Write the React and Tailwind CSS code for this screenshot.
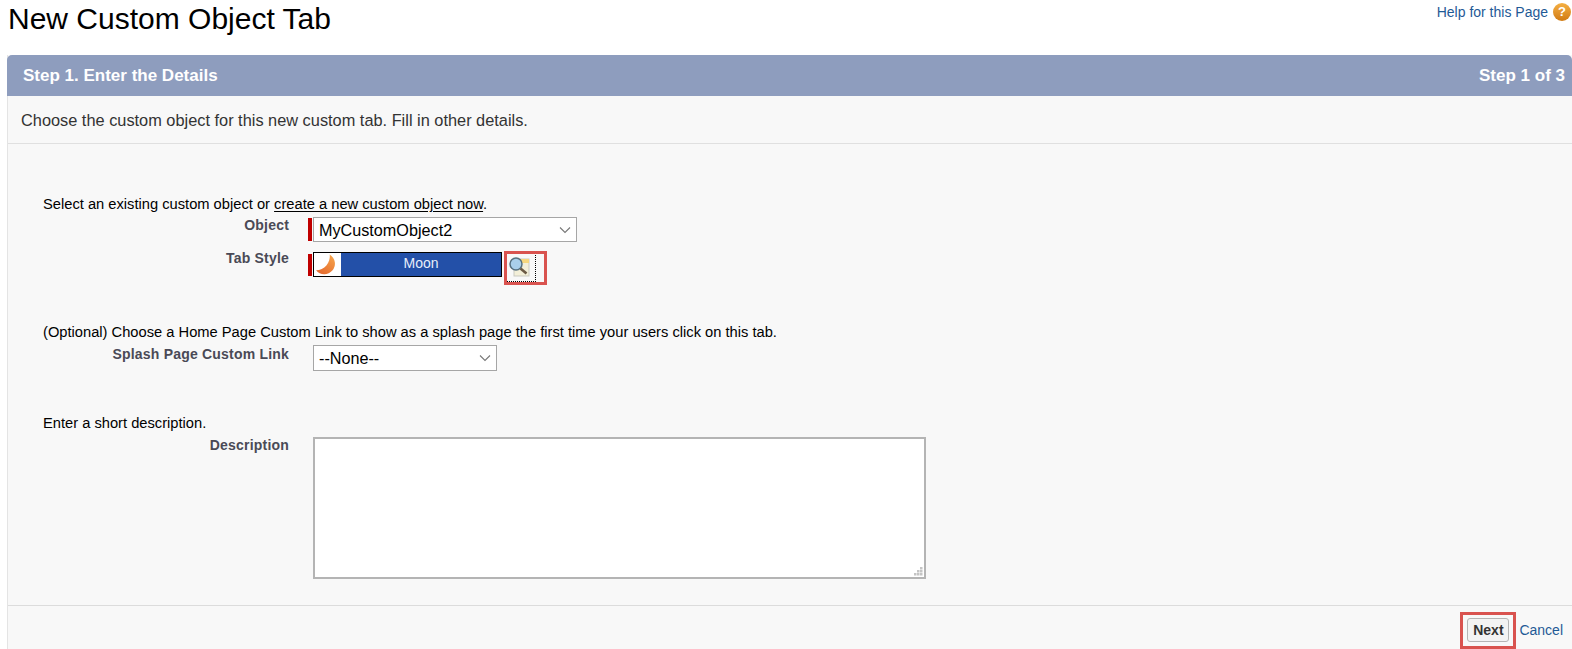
import React from "react";

const font = { fontFamily: '"Liberation Sans", Arial, sans-serif' };

function Label({ children }) {
  return (
    <div className="w-[246px] shrink-0 text-right text-[14px] leading-[16px] font-bold tracking-[0.2px] text-[#4a4a56]">
      {children}
    </div>
  );
}

function Chevron() {
  return (
    <svg
      width="12"
      height="8"
      viewBox="0 0 12 8"
      className="absolute right-[6px] top-[9px] pointer-events-none"
      fill="none"
      stroke="#777"
      strokeWidth="1.1"
    >
      <path d="M1 1.5l5 5 5-5" />
    </svg>
  );
}

function MoonIcon() {
  return (
    <svg width="23" height="23" viewBox="0 0 22 22" className="blur-[0.5px]">
      <defs>
        <linearGradient id="moonFill" x1="0.8" y1="0" x2="0.1" y2="1">
          <stop offset="0" stopColor="#f5a24a" />
          <stop offset="1" stopColor="#e4662c" />
        </linearGradient>
      </defs>
      <path d="M15 1.500A10.100 10.100 0 1 1 2 16.500A13.300 13.300 0 0 0 15 1.500z" fill="url(#moonFill)" />
    </svg>
  );
}

function LookupIcon() {
  return (
    <svg width="22" height="22" viewBox="0 0 22 22">
      <rect x="6" y="3" width="15" height="17" fill="#f3efd8" stroke="#c9c9c0" />
      <rect x="11" y="3" width="10" height="4" fill="#f6d77e" />
      <circle cx="8" cy="8" r="6" fill="#a9cfea" stroke="#56707f" strokeWidth="1.5" />
      <path d="M12.500 12.500l6 5" stroke="#6b5a45" strokeWidth="2.600" />
    </svg>
  );
}

function HelpIcon() {
  return (
    <div className="w-[18px] h-[18px] rounded-full bg-gradient-to-b from-[#f5b042] to-[#d07a10] text-white text-[13px] leading-[18px] font-bold text-center">
      ?
    </div>
  );
}

export default function App() {
  return (
    <div style={font} className="h-[649px] overflow-hidden bg-white text-black">
      {/* page title */}
      <div className="h-[55px] flex justify-between pl-[8px] pr-[1px]">
        <h1 className="text-[30px] leading-[38px] font-normal">New Custom Object Tab</h1>
        <div className="flex gap-[5px] pt-[3px] h-fit">
          <a className="text-[14px] leading-[18px] text-[#1f5a96]">Help for this Page</a>
          <HelpIcon />
        </div>
      </div>

      <div className="ml-[7px] h-[594px] flex flex-col bg-[#f8f8f8] border-l border-[#e4e4e4]">
        <div className="h-[41px] shrink-0 -ml-px rounded-t-[5px] bg-[#8e9dbe] flex items-center justify-between pt-px pl-[16px] pr-[7px] text-white text-[17px] font-bold">
          <span>Step 1. Enter the Details</span>
          <span>Step 1 of 3</span>
        </div>

        <div className="h-[48px] shrink-0 border-b border-[#e0e0e0] flex items-center pl-[13px] pt-[2px] text-[16.35px] text-[#333]">
          Choose the custom object for this new custom tab. Fill in other details.
        </div>

        {/* form */}
        <div className="h-[462px] shrink-0 border-b border-[#dcdcdc] pl-[35px] pt-[52px] text-[14.7px] leading-[16px]">
          <div>
            Select an existing custom object or{" "}
            <a className="underline underline-offset-2">create a new custom object now</a>.
          </div>

          <div className="flex mt-[4px]">
            <div className="pt-[1px]">
              <Label>Object</Label>
            </div>
            <div className="flex ml-[19px] pt-[1px]">
              <div className="w-[4px] h-[23px] bg-[#c00000] mt-px mr-px"></div>
              <div className="relative">
                <select className="block w-[264px] h-[25px] appearance-none bg-white border border-[#a6a6a6] pl-[5px] text-[16.2px] leading-[20px] rounded-none">
                  <option>MyCustomObject2</option>
                </select>
                <Chevron />
              </div>
            </div>
          </div>

          <div className="flex mt-[10px]">
            <div className="-mt-[2px]">
              <Label>Tab Style</Label>
            </div>
            <div className="flex ml-[19px]">
              <div className="w-[4px] h-[22px] bg-[#c00000] mt-[2px] mr-px"></div>
              <div className="w-[189px] h-[25px] border border-black flex bg-white">
                <div className="w-[27px] flex items-center">
                  <MoonIcon />
                </div>
                <div className="flex-1 bg-[#2350a8] text-[#e8eefa] text-center text-[14px] leading-[20px]">
                  Moon
                </div>
              </div>
              <button className="-mt-[1px] ml-[2px] w-[43px] h-[34px] border-[3px] border-[#d9534f] block">
                <div className="w-[29px] h-[27px] border-r border-b border-dotted border-black pl-[1px] pt-[1px]">
                  <LookupIcon />
                </div>
              </button>
            </div>
          </div>

          <div className="mt-[39px]">
            (Optional) Choose a Home Page Custom Link to show as a splash page the first time your users click on this tab.
          </div>

          <div className="flex mt-[5px]">
            <div className="pt-[1px]">
              <Label>Splash Page Custom Link</Label>
            </div>
            <div className="relative ml-[24px]">
              <select className="block w-[184px] h-[26px] appearance-none bg-white border border-[#a6a6a6] pl-[5px] text-[16.2px] leading-[20px] rounded-none">
                <option>--None--</option>
              </select>
              <Chevron />
            </div>
          </div>

          <div className="mt-[44px]">Enter a short description.</div>

          <div className="flex mt-[6px]">
            <div>
              <Label>Description</Label>
            </div>
            <div className="relative ml-[24px]">
              <textarea className="block w-[613px] h-[142px] resize-none bg-white border-2 border-[#b4b4b4] outline-none"></textarea>
              {/* resize grip */}
              <svg width="10" height="10" viewBox="0 0 10 10" className="absolute right-[3px] bottom-[3px]" fill="#c4c4c4">
                <rect x="7" y="1" width="2.500" height="2.500" />
                <rect x="4" y="4" width="2.500" height="2.500" />
                <rect x="7" y="4" width="2.500" height="2.500" />
                <rect x="1" y="7" width="2.500" height="2.500" />
                <rect x="4" y="7" width="2.500" height="2.500" />
                <rect x="7" y="7" width="2.500" height="2.500" />
              </svg>
            </div>
          </div>
        </div>

        {/* footer */}
        <div className="flex-1 flex justify-end pr-[9px] pt-[6px] text-[14px]">
          <div className="flex items-start gap-[3px]">
            <div className="w-[56px] h-[37px] border-[3px] border-[#d9534f] pl-[4px] pt-[3px]">
              <button className="block w-[42px] h-[24px] rounded-[3px] border border-[#b5b5b5] bg-[#f3f3f3] font-bold text-[14px] leading-[20px] text-[#333]">
                Next
              </button>
            </div>
            <a className="pt-[8px] text-[#1f5a96]">Cancel</a>
          </div>
        </div>
      </div>
    </div>
  );
}
